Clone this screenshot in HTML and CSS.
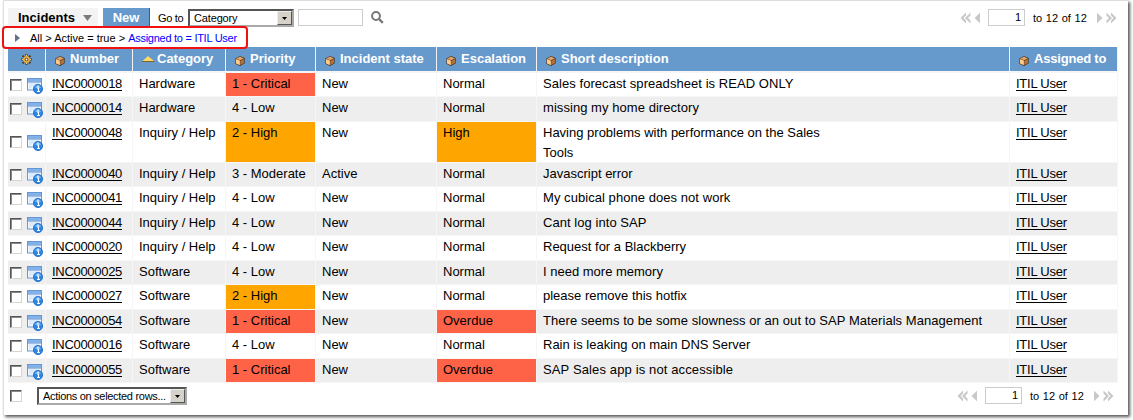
FILE: index.html
```html
<!DOCTYPE html>
<html lang="en">
<head>
<meta charset="utf-8">
<title>Incidents</title>
<link rel="stylesheet" href="styles.css">
</head>
<body>
<svg class="defs">
  <symbol id="cube" viewBox="0 0 10 10"><path d="M5 0 9.6 2.1V7.2L5 10 .4 7.7V2.5Z" fill="#3c2410"/><path d="M5 .5 9 2.4 5.2 4.3 1 2.8Z" fill="#dfa268"/><path d="M.9 3.1 4.9 4.6V9.300L.9 7.4Z" fill="#ffc98b"/><path d="M5.200 4.700 9.100 2.900V7L5.200 9.300Z" fill="#b0713a"/></symbol>
  <symbol id="gear" viewBox="0 0 11 11"><g stroke="#49351b" stroke-width="2"><path d="M5.5 0V11M0 5.5H11M1.6 1.6 9.4 9.4M9.4 1.6 1.6 9.4"/></g><circle cx="5.5" cy="5.5" r="3.5" fill="#e9ad45"/><path d="M5.5 .8V2M5.5 9V10.2M.8 5.5H2M9 5.5H10.2" stroke="#ffd477"/><circle cx="5.5" cy="5.5" r="1.8" fill="#6e4b20"/><circle cx="5.5" cy="5.5" r=".9" fill="#fff"/></symbol>
  <symbol id="info" viewBox="0 0 16 16"><rect x=".5" y=".5" width="14" height="11.5" fill="#f4f9ff" stroke="#6797d3"/><path d="M1 1H14V3.5H1Z" fill="#82b2eb"/><path d="M1 4H14" stroke="#5386c8"/><path d="M2 5H13L2 11Z" fill="#dcebfc"/><circle cx="11" cy="11" r="4.6" fill="#2c86e6" stroke="#1966bd" stroke-width=".8"/><path d="M7.7 9.5A3.8 3.8 0 0 1 14.3 9.5Q11 11 7.7 9.5Z" fill="#75b8fa"/><path d="M10 10H11.5V13.5M10 13.5H13M11 7.5V9" stroke="#fff" stroke-width="1.2" fill="none"/></symbol>
  <symbol id="prev" viewBox="0 0 21 12"><path d="M6 .5V3.500L3.5 6 6 8.500V11.500L.5 6ZM10.500 .5V3.500L8 6 10.500 8.500V11.500L5 6ZM20 .8V11.200L14.500 6Z" fill="#c8c8c8"/></symbol>
  <symbol id="next" viewBox="0 0 21 12"><path d="M1 .8V11.200L6.500 6ZM10.500 .5V3.500L13 6 10.500 8.500V11.500L16 6ZM15 .5V3.500L17.500 6 15 8.500V11.500L20.500 6Z" fill="#c8c8c8"/></symbol>
  <symbol id="down" viewBox="0 0 5 3"><path d="M0 0H5L2.500 3Z" fill="#000"/></symbol>
</svg>
<main class="panel">
  <header class="toolbar">
    <div class="title">Incidents<svg class="caret" viewBox="0 0 9 6"><path d="M0 0H9L4.500 6Z" fill="#7b7b7b"/></svg></div>
    <div class="new">New</div>
    <span class="goto">Go to</span>
    <div class="select category"><span>Category</span><b class="drop"><svg><use href="#down"/></svg></b></div>
    <div class="field search"></div>
    <svg class="lens" viewBox="0 0 13 13"><circle cx="5" cy="5" r="3.900" fill="none" stroke="#777" stroke-width="2"/><path d="M8 8 11.800 11.800" stroke="#777" stroke-width="2.400"/></svg>
    <div class="pager"><svg><use href="#prev"/></svg><div class="field page">1</div><span>to 12 of 12</span><svg><use href="#next"/></svg></div>
  </header>
  <nav class="crumbs"><svg viewBox="0 0 5 8"><path d="M0 0 5 4 0 8Z" fill="#607486"/></svg><span>All &gt; Active = true &gt; <span class="current">Assigned to = ITIL User</span></span></nav>
  <div class="highlight"></div>
  <table class="list">
    <colgroup><col class="c-check"><col class="c-num"><col class="c-cat"><col class="c-pri"><col class="c-state"><col class="c-esc"><col class="c-desc"><col class="c-user"></colgroup>
    <thead><tr>
      <th><svg class="gear"><use href="#gear"/></svg></th>
      <th><svg><use href="#cube"/></svg>Number</th>
      <th><svg class="sort" viewBox="0 0 13 6"><path d="M0 5.500 6 0 12.500 5.500Z" fill="#ffda66"/><path d="M0 5.500H12.500" stroke="#806326"/></svg>Category</th>
      <th><svg><use href="#cube"/></svg>Priority</th>
      <th><svg><use href="#cube"/></svg>Incident state</th>
      <th><svg><use href="#cube"/></svg>Escalation</th>
      <th><svg><use href="#cube"/></svg>Short description</th>
      <th class="assigned"><svg><use href="#cube"/></svg>Assigned to</th>
    </tr></thead>
    <tbody>
      <tr><td class="tools"><div><i class="box"></i><svg><use href="#info"/></svg></div></td><td class="num"><u>INC0000018</u></td><td>Hardware</td><td class="red">1 - Critical</td><td>New</td><td>Normal</td><td class="desc">Sales forecast spreadsheet is READ ONLY</td><td class="user"><u>ITIL User</u></td></tr>
      <tr><td class="tools"><div><i class="box"></i><svg><use href="#info"/></svg></div></td><td class="num"><u>INC0000014</u></td><td>Hardware</td><td>4 - Low</td><td>New</td><td>Normal</td><td class="desc">missing my home directory</td><td class="user"><u>ITIL User</u></td></tr>
      <tr class="tall"><td class="tools"><div><i class="box"></i><svg><use href="#info"/></svg></div></td><td class="num"><u>INC0000048</u></td><td>Inquiry / Help</td><td class="orange">2 - High</td><td>New</td><td class="orange">High</td><td>Having problems with performance on the Sales<br>Tools</td><td class="user"><u>ITIL User</u></td></tr>
      <tr><td class="tools"><div><i class="box"></i><svg><use href="#info"/></svg></div></td><td class="num"><u>INC0000040</u></td><td>Inquiry / Help</td><td>3 - Moderate</td><td>Active</td><td>Normal</td><td>Javascript error</td><td class="user"><u>ITIL User</u></td></tr>
      <tr><td class="tools"><div><i class="box"></i><svg><use href="#info"/></svg></div></td><td class="num"><u>INC0000041</u></td><td>Inquiry / Help</td><td>4 - Low</td><td>New</td><td>Normal</td><td class="desc">My cubical phone does not work</td><td class="user"><u>ITIL User</u></td></tr>
      <tr><td class="tools"><div><i class="box"></i><svg><use href="#info"/></svg></div></td><td class="num"><u>INC0000044</u></td><td>Inquiry / Help</td><td>4 - Low</td><td>New</td><td>Normal</td><td class="desc">Cant log into SAP</td><td class="user"><u>ITIL User</u></td></tr>
      <tr><td class="tools"><div><i class="box"></i><svg><use href="#info"/></svg></div></td><td class="num"><u>INC0000020</u></td><td>Inquiry / Help</td><td>4 - Low</td><td>New</td><td>Normal</td><td>Request for a Blackberry</td><td class="user"><u>ITIL User</u></td></tr>
      <tr><td class="tools"><div><i class="box"></i><svg><use href="#info"/></svg></div></td><td class="num"><u>INC0000025</u></td><td>Software</td><td>4 - Low</td><td>New</td><td>Normal</td><td>I need more memory</td><td class="user"><u>ITIL User</u></td></tr>
      <tr><td class="tools"><div><i class="box"></i><svg><use href="#info"/></svg></div></td><td class="num"><u>INC0000027</u></td><td>Software</td><td class="orange">2 - High</td><td>New</td><td>Normal</td><td>please remove this hotfix</td><td class="user"><u>ITIL User</u></td></tr>
      <tr><td class="tools"><div><i class="box"></i><svg><use href="#info"/></svg></div></td><td class="num"><u>INC0000054</u></td><td>Software</td><td class="red">1 - Critical</td><td>New</td><td class="red">Overdue</td><td class="desc">There seems to be some slowness or an out to SAP Materials Management</td><td class="user"><u>ITIL User</u></td></tr>
      <tr><td class="tools"><div><i class="box"></i><svg><use href="#info"/></svg></div></td><td class="num"><u>INC0000016</u></td><td>Software</td><td>4 - Low</td><td>New</td><td>Normal</td><td>Rain is leaking on main DNS Server</td><td class="user"><u>ITIL User</u></td></tr>
      <tr><td class="tools"><div><i class="box"></i><svg><use href="#info"/></svg></div></td><td class="num"><u>INC0000055</u></td><td>Software</td><td class="red">1 - Critical</td><td>New</td><td class="red">Overdue</td><td class="sap">SAP Sales app is not accessible</td><td class="user"><u>ITIL User</u></td></tr>
    </tbody>
  </table>
  <footer class="footer">
    <i class="box"></i>
    <div class="select actions"><span>Actions on selected rows...</span><b class="drop"><svg><use href="#down"/></svg></b></div>
    <div class="pager"><svg><use href="#prev"/></svg><div class="field page">1</div><span>to 12 of 12</span><svg><use href="#next"/></svg></div>
  </footer>
</main>
</body>
</html>
```
FILE: styles.css
```css
* { box-sizing: border-box; }
body { margin: 0; height: 420px; overflow: hidden; background: #fff; font: 13px/20px "Liberation Sans", Arial, sans-serif; color: #000; }
svg { display: block; flex: none; }
.defs { width: 0; height: 0; position: absolute; }
.panel { position: relative; margin: 0 5px 0 3px; height: 415px; padding: 0 9px 0 4px; border-top: 1px solid #ddd; border-left: 1px solid #ddd; box-shadow: 2px 2px 3px #555; background: #fff; }
.toolbar { display: flex; align-items: center; height: 32px; padding-top: 1px; font-size: 11px; }
.title { display: flex; align-items: center; width: 90px; height: 20px; padding-left: 10px; background: #f3f3f3; font-size: 13px; font-weight: bold; }
.caret { width: 9px; height: 6px; margin-left: 8px; }
.new { width: 47px; height: 19px; margin-left: 5px; border-right: 1px solid #30628f; border-bottom: 1px solid #30628f; background: #69c; color: #fff; font-size: 13px; font-weight: bold; line-height: 19px; text-align: center; }
.goto { width: 30px; margin-left: 8px; letter-spacing: -.3px; white-space: nowrap; }
.select { display: flex; justify-content: space-between; align-items: center; height: 18px; padding-left: 4px; border: 2px solid; border-color: #555 #aaa #aaa #555; font-size: 11px; line-height: 14px; white-space: nowrap; }
.category { width: 106px; letter-spacing: -.15px; }
.drop { display: flex; align-items: center; justify-content: center; width: 15px; height: 14px; background: #d6d2ca; border: 1px solid; border-color: #eee #555 #555 #eee; }
.drop svg { width: 5px; height: 3px; margin-top: 2px; }
.field { height: 17px; border: 1px solid #ccc; background: #fff; }
.search { width: 65px; margin-left: 4px; }
.lens { width: 13px; height: 13px; margin-left: 8px; }
.pager { display: flex; align-items: center; margin-left: auto; margin-right: 2px; font-size: 11px; }
.pager > svg { width: 21px; height: 12px; }
.page { width: 37px; margin: 0 8px 0 7px; padding-right: 3px; text-align: right; line-height: 15px; }
.pager span { width: 54px; margin-right: 9px; white-space: nowrap; word-spacing: .6px; }
.crumbs { display: flex; align-items: center; height: 14px; padding: 0 0 4px 7px; font-size: 11px; line-height: 12px; }
.crumbs svg { width: 5px; height: 8px; margin-right: 10px; }
.current { color: #00f; letter-spacing: -.27px; }
.highlight { position: absolute; left: -2px; top: 25px; width: 246px; height: 23px; border: 2px solid #f01010; border-radius: 4px; z-index: 2; }
.list { table-layout: fixed; width: 1110px; border-collapse: separate; border-spacing: 0; }
.c-check { width: 38px; }
.c-num { width: 87px; }
.c-cat { width: 93px; }
.c-pri { width: 90px; }
.c-state { width: 121px; }
.c-esc { width: 100px; }
.c-desc { width: 473px; }
.c-user { width: 108px; }
th { height: 26px; padding: 0 0 0 9px; background: #69c; border-right: 1px solid #f3f3f3; border-bottom: 2px solid #f6f6f6; color: #fff; text-align: left; white-space: nowrap; line-height: 24px; }
th svg { display: inline-block; width: 10px; height: 10px; margin-right: 5px; vertical-align: -3px; }
th .sort { width: 13px; height: 6px; margin-right: 2px; vertical-align: 1px; }
th .gear { width: 11px; height: 11px; margin-left: 4px; vertical-align: -2px; }
.assigned { letter-spacing: -.2px; }
td { height: 24px; padding: 1px 0 0 6px; border-right: 1px solid #f6f6f6; border-bottom: 1px solid #f6f6f6; line-height: 20px; vertical-align: top; white-space: nowrap; }
tbody tr:nth-child(even) td { background-color: #eee; }
tbody tr:nth-child(2) td, tbody tr:nth-child(n+5):nth-child(odd) td { height: 25px; }
tbody tr.tall td { height: 41px; line-height: 19.5px; }
td.tools { padding: 0 0 0 2px; vertical-align: middle; }
.tools div { display: flex; align-items: flex-start; height: 16px; margin-top: 2px; }
.tools .box { margin-top: 1px; }
.tools svg { width: 16px; height: 16px; margin-left: 5px; }
.box { width: 12px; height: 12px; flex: none; border: 1px solid; border-color: #555 #d8d5cf #d8d5cf #555; box-shadow: inset 1px 1px #888; background: #fff; }
td.red, tbody tr:nth-child(n) td.red { background-color: #ff6347; }
td.orange, tbody tr:nth-child(n) td.orange { background-color: #ffa500; }
.num { letter-spacing: -.3px; }
.user { letter-spacing: -.25px; }
.desc { letter-spacing: .055px; }
.sap { letter-spacing: .13px; }
u { text-underline-offset: 2px; text-decoration-thickness: 1px; }
.footer { display: flex; align-items: center; height: 25px; padding-left: 2px; }
.actions { width: 150px; margin-left: 15px; letter-spacing: -.3px; }
.footer .pager { margin-right: 5px; }
```
